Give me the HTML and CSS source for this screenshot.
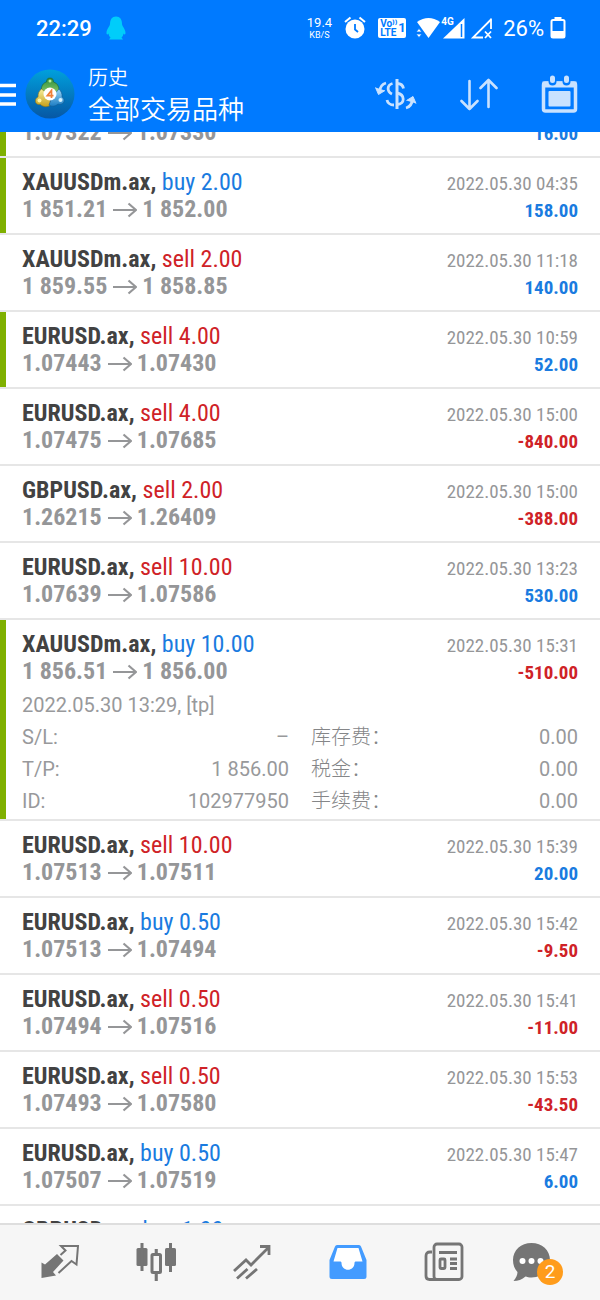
FILE: index.html
```html
<!DOCTYPE html>
<html lang="zh-CN">
<head>
<meta charset="utf-8">
<meta name="viewport" content="width=device-width, initial-scale=1">
<title>历史</title>
<link rel="stylesheet" href="styles.css">
</head>
<body>
<svg class="defs" aria-hidden="true">
  <symbol id="arrow" viewBox="0 0 24 16"><path d="M0 8H23M15.500 1.500L23 8L15.500 14.500" fill="none" stroke="currentColor" stroke-width="2.200"/></symbol>
</svg>

<header class="header">
  <div class="status">
    <span class="clock">22:29</span>
    <svg class="penguin" width="20" height="24" viewBox="0 0 20 24" aria-hidden="true"><path d="M10 0.500C14 0.500 16 3.500 16 8C16 10 19.500 13 19.500 17C19.500 18.500 18.500 19 17.500 17.500C17.300 19.500 16.500 20.500 15.500 21.500L17 23.500H3L4.500 21.500C3.500 20.500 2.700 19.500 2.500 17.500C1.500 19 0.500 18.500 0.500 17C0.500 13 4 10 4 8C4 3.500 6 0.500 10 0.500Z" fill="#00cdfa"/></svg>
    <div class="status-right">
      <span class="speed"><span class="speed-value">19.4</span><span class="speed-unit">KB/S</span></span>
      <svg class="alarm" width="22" height="24" viewBox="0 0 22 24" aria-hidden="true"><circle cx="11" cy="13" r="9.500" fill="#fff"/><path d="M1 6L6.500 1.500M21 6L15.500 1.500" stroke="#fff" stroke-width="2"/><path d="M11 8V13.500L14 16" fill="none" stroke="#007aff" stroke-width="1.800"/></svg>
      <span class="volte"><span class="volte-text"><span>Vo⁾⁾</span><span>LTE</span></span><span class="volte-sim">1</span></span>
      <span class="signals">
        <svg width="76" height="24" viewBox="0 0 76 24" aria-hidden="true">
          <path d="M1 6Q12.500 -2 24 6L12.500 22Z" fill="#fff"/>
          <path d="M0 16L3 12.500L6 16ZM0 18L3 21.500L6 18Z" fill="#fff" stroke="#007aff" stroke-width=".8"/>
          <path d="M27 22.500L48.500 2V22.500Z" fill="#fff"/><path d="M45.500 8V21" stroke="#007aff" stroke-width="1.500"/>
          <path d="M67 21.500H57L75 3.500" fill="none" stroke="#fff" stroke-width="1.800"/><path d="M75 2.500V13" stroke="#fff" stroke-width="1.800"/><path d="M69 15.500L75 22M75 15.500L69 22" stroke="#fff" stroke-width="1.800"/>
        </svg>
        <span class="network">4G</span>
      </span>
      <span class="percent">26%</span>
      <svg class="battery" width="16" height="22" viewBox="0 0 16 22" aria-hidden="true"><path d="M4.500 0H11.500V2.500H4.500Z" fill="#fff"/><rect x="1.500" y="3" width="13" height="17.500" rx="1.500" fill="none" stroke="#fff" stroke-width="2"/><path d="M1.500 14H14.500V20.500H1.500Z" fill="#fff"/></svg>
    </div>
  </div>

  <div class="toolbar">
    <button class="icon-button menu" aria-label="菜单"><svg width="16" height="24" viewBox="0 0 16 24"><path d="M0 3.500H16M0 13H16M0 22H16" stroke="#fff" stroke-width="3.500"/></svg></button>
    <svg class="logo" width="50" height="50" viewBox="0 0 50 50" aria-hidden="true">
      <defs>
        <linearGradient id="disc" x1="0" y1="0" x2="0" y2="1"><stop offset="0" stop-color="#00a0dc"/><stop offset="1" stop-color="#0757a4"/></linearGradient>
        <linearGradient id="gold" x1="0" y1="0" x2="0" y2="1"><stop offset="0" stop-color="#f6ee9a"/><stop offset="1" stop-color="#c6a01c"/></linearGradient>
        <linearGradient id="leaf" x1="0" y1="0" x2="0" y2="1"><stop offset="0" stop-color="#2d8c3c"/><stop offset="1" stop-color="#8fcf6a"/></linearGradient>
        <linearGradient id="sky" x1="0" y1="0" x2="0" y2="1"><stop offset="0" stop-color="#9bd6f5"/><stop offset="1" stop-color="#1c7dc4"/></linearGradient>
      </defs>
      <circle cx="25" cy="25" r="24.500" fill="url(#disc)"/>
      <path d="M25 9C28 9 28.500 11 28.500 13C32 14 34 17 34 21L31 26H19L16.500 22C16 17 18 14 21.500 13C21.500 11 22 9 25 9Z" fill="url(#leaf)" stroke="#17632f" stroke-width=".6"/>
      <path d="M16.500 20L24 26L26 36C22 38.500 18 38 15.500 35.500C12 36 10 34 10.500 31C11 29 12 28.500 13 28C13 24 14 22 16.500 20Z" fill="url(#gold)" stroke="#8a741e" stroke-width=".6"/>
      <path d="M34 20C36 22 37.500 25 37 28C39.500 29.500 40 33 37.500 34.500C35.500 36 34 35 33 35C30 37.500 27 38 24 36L27 28Z" fill="url(#sky)" stroke="#155b94" stroke-width=".6"/>
      <circle cx="25" cy="12" r="1.500" fill="#baf09a"/><circle cx="14.500" cy="31.500" r="2" fill="#fff4a2"/><circle cx="35.500" cy="31" r="2" fill="#d6f2ff"/>
      <circle cx="25" cy="25" r="6.500" fill="#fff"/>
      <path d="M26.500 29V21.500L22.300 26.700H28.500" fill="none" stroke="#f08038" stroke-width="1.700"/>
    </svg>
    <div class="heading"><span class="heading-small">历史</span><h1 class="heading-large">全部交易品种</h1></div>
    <div class="actions">
      <button class="icon-button" aria-label="币种"><svg width="42" height="34" viewBox="0 0 42 34" fill="none" stroke="#c9e2ff" stroke-width="2.800"><path d="M22 2V32" stroke-width="3"/><path d="M22 6.500C26 6.500 28 8.500 28.500 11.500"/><path d="M22 16C30 17.500 30.500 27 22 27.500"/><path d="M17.500 6.500C12 8 11.500 14.500 17 17"/><path d="M12 23C12.500 25.500 15 28 19 28"/><path d="M11 6C7 7 5 10 4.500 15"/><path d="M0.500 10.500L3.500 17.500L10 13.500" fill="#c9e2ff" stroke-width="1"/><path d="M31 31C35 30 37 27 37.500 22"/><path d="M31.500 23.500L38 19.500L41 26.500" fill="#c9e2ff" stroke-width="1"/></svg></button>
      <button class="icon-button" aria-label="排序"><svg width="38" height="34" viewBox="0 0 38 34" fill="none" stroke="#c9e2ff" stroke-width="2.600" stroke-linecap="round" stroke-linejoin="round"><path d="M9.500 4V32M1.500 24L9.500 32L17.500 24M28.500 30V3M20.500 11L28.500 3L36.500 11"/></svg></button>
      <button class="icon-button" aria-label="日期"><svg width="37" height="38" viewBox="0 0 37 38"><rect x="2.500" y="8" width="32" height="28" rx="2" fill="none" stroke="#c9e2ff" stroke-width="3.500"/><path d="M1.500 6.500H35.500V12.500H1.500Z" fill="#c9e2ff"/><rect x="7.500" y="16" width="22" height="15.500" rx="1" fill="#c9e2ff"/><path d="M11.500 4V6.500M25.500 4V6.500" stroke="#007aff" stroke-width="8" stroke-linecap="round"/><path d="M11.500 3V5.500M25.500 3V5.500" stroke="#c9e2ff" stroke-width="5" stroke-linecap="round"/></svg></button>
    </div>
  </div>
</header>

<main class="history">
  <ul class="deals">
    <li class="deal"><div class="deal-body marked"><div class="line"><b class="symbol">EURUSD.ax, <span class="buy">buy 4.00</span></b></div><div class="line"><span class="prices">1.07322<svg class="arrow"><use href="#arrow"/></svg>1.07330</span><b class="profit gain">16.00</b></div></div></li>
    <li class="deal"><div class="deal-body marked"><div class="line"><b class="symbol">XAUUSDm.ax, <span class="buy">buy 2.00</span></b><time class="time">2022.05.30 04:35</time></div><div class="line"><span class="prices">1 851.21<svg class="arrow"><use href="#arrow"/></svg>1 852.00</span><b class="profit gain">158.00</b></div></div></li>
    <li class="deal"><div class="deal-body"><div class="line"><b class="symbol">XAUUSDm.ax, <span class="sell">sell 2.00</span></b><time class="time">2022.05.30 11:18</time></div><div class="line"><span class="prices">1 859.55<svg class="arrow"><use href="#arrow"/></svg>1 858.85</span><b class="profit gain">140.00</b></div></div></li>
    <li class="deal"><div class="deal-body marked"><div class="line"><b class="symbol">EURUSD.ax, <span class="sell">sell 4.00</span></b><time class="time">2022.05.30 10:59</time></div><div class="line"><span class="prices">1.07443<svg class="arrow"><use href="#arrow"/></svg>1.07430</span><b class="profit gain">52.00</b></div></div></li>
    <li class="deal"><div class="deal-body"><div class="line"><b class="symbol">EURUSD.ax, <span class="sell">sell 4.00</span></b><time class="time">2022.05.30 15:00</time></div><div class="line"><span class="prices">1.07475<svg class="arrow"><use href="#arrow"/></svg>1.07685</span><b class="profit loss">-840.00</b></div></div></li>
    <li class="deal"><div class="deal-body"><div class="line"><b class="symbol">GBPUSD.ax, <span class="sell">sell 2.00</span></b><time class="time">2022.05.30 15:00</time></div><div class="line"><span class="prices">1.26215<svg class="arrow"><use href="#arrow"/></svg>1.26409</span><b class="profit loss">-388.00</b></div></div></li>
    <li class="deal"><div class="deal-body"><div class="line"><b class="symbol">EURUSD.ax, <span class="sell">sell 10.00</span></b><time class="time">2022.05.30 13:23</time></div><div class="line"><span class="prices">1.07639<svg class="arrow"><use href="#arrow"/></svg>1.07586</span><b class="profit gain">530.00</b></div></div></li>
    <li class="deal"><div class="deal-body marked expanded"><div class="line"><b class="symbol">XAUUSDm.ax, <span class="buy">buy 10.00</span></b><time class="time">2022.05.30 15:31</time></div><div class="line"><span class="prices">1 856.51<svg class="arrow"><use href="#arrow"/></svg>1 856.00</span><b class="profit loss">-510.00</b></div>
      <div class="details">
        <p class="opened">2022.05.30 13:29, [tp]</p>
        <dl class="facts"><div><dt>S/L:</dt><dd>–</dd></div><div><dt>T/P:</dt><dd>1 856.00</dd></div><div><dt>ID:</dt><dd>102977950</dd></div></dl>
        <dl class="facts fees"><div><dt>库存费：</dt><dd>0.00</dd></div><div><dt>税金：</dt><dd>0.00</dd></div><div><dt>手续费：</dt><dd>0.00</dd></div></dl>
      </div></div></li>
    <li class="deal"><div class="deal-body"><div class="line"><b class="symbol">EURUSD.ax, <span class="sell">sell 10.00</span></b><time class="time">2022.05.30 15:39</time></div><div class="line"><span class="prices">1.07513<svg class="arrow"><use href="#arrow"/></svg>1.07511</span><b class="profit gain">20.00</b></div></div></li>
    <li class="deal"><div class="deal-body"><div class="line"><b class="symbol">EURUSD.ax, <span class="buy">buy 0.50</span></b><time class="time">2022.05.30 15:42</time></div><div class="line"><span class="prices">1.07513<svg class="arrow"><use href="#arrow"/></svg>1.07494</span><b class="profit loss">-9.50</b></div></div></li>
    <li class="deal"><div class="deal-body"><div class="line"><b class="symbol">EURUSD.ax, <span class="sell">sell 0.50</span></b><time class="time">2022.05.30 15:41</time></div><div class="line"><span class="prices">1.07494<svg class="arrow"><use href="#arrow"/></svg>1.07516</span><b class="profit loss">-11.00</b></div></div></li>
    <li class="deal"><div class="deal-body"><div class="line"><b class="symbol">EURUSD.ax, <span class="sell">sell 0.50</span></b><time class="time">2022.05.30 15:53</time></div><div class="line"><span class="prices">1.07493<svg class="arrow"><use href="#arrow"/></svg>1.07580</span><b class="profit loss">-43.50</b></div></div></li>
    <li class="deal"><div class="deal-body"><div class="line"><b class="symbol">EURUSD.ax, <span class="buy">buy 0.50</span></b><time class="time">2022.05.30 15:47</time></div><div class="line"><span class="prices">1.07507<svg class="arrow"><use href="#arrow"/></svg>1.07519</span><b class="profit gain">6.00</b></div></div></li>
    <li class="deal"><div class="deal-body"><div class="line"><b class="symbol">GBPUSD.ax, <span class="buy">buy 1.00</span></b></div></div></li>
  </ul>
</main>

<nav class="tabs">
  <button class="tab" aria-label="行情"><svg width="40" height="36" viewBox="0 0 40 36"><path d="M1.500 18.500L5 20.500L17 10L23.500 16.500L13 28L16 31.500L1.500 34Z" fill="#757575"/><path d="M18.500 29L31.500 17L36.500 20.500L38 2H21L25.500 6.500L20.500 11" fill="none" stroke="#757575" stroke-width="2"/></svg></button>
  <button class="tab" aria-label="图表"><svg width="40" height="40" viewBox="0 0 40 40" fill="#757575"><rect x="0.500" y="6" width="11" height="18" rx="1.500"/><path d="M4.500 1H7.500V29H4.500Z"/><rect x="29" y="6" width="11" height="18" rx="1.500"/><path d="M33 1H36V30H33Z"/><rect x="16" y="12.500" width="8.500" height="18" rx="1" fill="none" stroke="#757575" stroke-width="3"/><path d="M18.700 7H21.800V12H18.700ZM18.700 31H21.800V39H18.700Z"/></svg></button>
  <button class="tab" aria-label="交易"><svg width="40" height="36" viewBox="0 0 40 36" fill="none" stroke="#757575" stroke-width="2.800"><path d="M2 27L14 16L19 21L36 4M28 2.500H37V11M5 34.500L15.500 25M14 34.500L25 25"/></svg></button>
  <button class="tab" aria-label="历史"><svg width="38" height="36" viewBox="0 0 38 36"><path d="M8 1H30Q31.500 1 32 2.500L37.500 16V32.500Q37.500 35 35 35H3Q0.500 35 0.500 32.500V16L6 2.500Q6.500 1 8 1Z" fill="#439bff"/><path d="M8.500 4L4.500 17.500H11C12 17.500 12.500 18 12.500 19C12.500 28 25.500 28 25.500 19C25.500 18 26 17.500 27 17.500H33.500L29.500 4Z" fill="#fff"/></svg></button>
  <button class="tab" aria-label="新闻"><svg width="40" height="40" viewBox="0 0 40 40" fill="none" stroke="#757575" stroke-width="2.800"><rect x="10" y="2" width="28" height="35.500" rx="3"/><path d="M8 10H6Q2 10 2 14V34Q2 37.500 5.500 37.500H14M15 10.500H33M26 17H33M26 21.500H33M26 26.500H33"/><rect x="16" y="17" width="5" height="9.500" rx="1"/></svg></button>
  <button class="tab" aria-label="消息"><span class="chat"><svg width="40" height="40" viewBox="0 0 40 40"><path d="M19.500 1C30 1 38 8 38 18C38 28 30 35.500 19.500 35.500C17 35.500 15 35 13.500 34.500C10 37.500 6 39 1.500 39C4 36 5.500 33 5.500 30C2.500 27 1 23 1 18C1 8 9 1 19.500 1Z" fill="#757575"/><circle cx="10.500" cy="19" r="3" fill="#fff"/><circle cx="19.500" cy="19" r="3" fill="#fff"/><circle cx="28.500" cy="19" r="3" fill="#fff"/></svg><span class="badge">2</span></span></button>
</nav>
</body>
</html>
```
FILE: styles.css
```css
* { box-sizing: border-box; }

body {
  margin: 0;
  height: 100vh;
  display: flex;
  flex-direction: column;
  background: #fff;
  font-family: Roboto, "Noto Sans CJK SC", sans-serif;
  color: #424242;
}

.defs { display: none; }
svg { display: block; flex: none; }
button { border: 0; padding: 0; background: none; font: inherit; }

/* Header */
.header {
  flex: none;
  background: #007aff;
  color: #fff;
}

.status {
  display: flex;
  align-items: center;
  height: 56px;
  padding: 0 34px 0 36px;
}
.clock { font-size: 22px; font-weight: 500; }
.penguin { margin-left: 14px; }
.status-right { display: flex; align-items: center; margin-left: auto; }
.speed { display: flex; flex-direction: column; align-items: center; }
.speed-value { font-size: 13px; line-height: 14px; }
.speed-unit { font-size: 9px; line-height: 10px; }
.alarm { margin-left: 12px; }
.volte {
  display: flex;
  align-items: center;
  gap: 1px;
  margin-left: 12px;
  width: 28px;
  height: 20px;
  padding-left: 2px;
  border-radius: 2px;
  background: #fff;
  color: #007aff;
  font-weight: 700;
}
.volte-text { display: flex; flex-direction: column; font-size: 10px; line-height: 9px; }
.volte-sim { font-size: 13px; line-height: 20px; }
.signals { position: relative; margin-left: 10px; }
.network { position: absolute; left: 25px; top: 1px; font-size: 10px; line-height: 10px; font-weight: 700; }
.percent { margin-left: 11px; font-size: 22px; }
.battery { margin-left: 6px; }

.toolbar { display: flex; align-items: center; padding: 7px 22px 7px 0; }
.logo { margin-left: 9px; }
.heading { margin-left: 13px; font-family: "Noto Sans CJK SC", sans-serif; }
.heading-small { display: block; font-size: 20px; line-height: 28px; font-weight: 350; }
.heading-large { margin: 0; font-size: 26px; line-height: 34px; font-weight: 350; }
.actions { display: flex; align-items: center; gap: 43px; margin-left: auto; }

/* Deals */
.history { flex: 1; min-height: 0; overflow: hidden; }
.deals { list-style: none; margin: -51px 0 0; padding: 0; }
.deal { border-bottom: 2px solid #e6e6e6; }
.deal-body {
  border-left: 6px solid transparent;
  padding: 11px 22px 10px 16px;
}
.marked { border-left-color: #7fb000; }
.expanded { padding-bottom: 2px; }
.line {
  display: flex;
  justify-content: space-between;
  align-items: baseline;
  font-family: "Roboto Condensed", "Liberation Sans Narrow", sans-serif;
  font-size: 24px;
  line-height: 27px;
}
.symbol { font-weight: 700; }
.symbol span { font-weight: 400; }
.prices { display: flex; align-items: center; font-weight: 700; color: #959698; }
.arrow { width: 24px; height: 16px; margin: 0 5px 0 6px; }
.time, .profit { font-size: 19px; line-height: 22px; }
.time { color: #959698; }
.buy, .gain { color: #1a7be0; }
.sell, .loss { color: #cf2227; }

.details {
  display: grid;
  grid-template-columns: 1fr 1fr;
  column-gap: 22px;
  padding-top: 4px;
  font-size: 20px;
  line-height: 32px;
  color: #98999b;
}
.opened { grid-column: 1 / -1; margin: 0; }
.facts { margin: 0; }
.facts div { display: flex; justify-content: space-between; }
.facts dd { margin: 0; }
.fees dt { font-weight: 300; color: #858688; }

/* Bottom tabs */
.tabs {
  flex: none;
  display: flex;
  align-items: center;
  height: 77px;
  padding: 0 12px 2px;
  border-top: 2px solid #dedede;
  background: #f6f6f6;
}
.tab { flex: 1; display: flex; justify-content: center; }
.chat { display: block; position: relative; width: 56px; }
.badge {
  position: absolute;
  left: 25px;
  top: 17px;
  width: 26px;
  height: 26px;
  border-radius: 50%;
  background: #ff9c1b;
  color: #fff;
  font-size: 19px;
  line-height: 26px;
  text-align: center;
}
```
